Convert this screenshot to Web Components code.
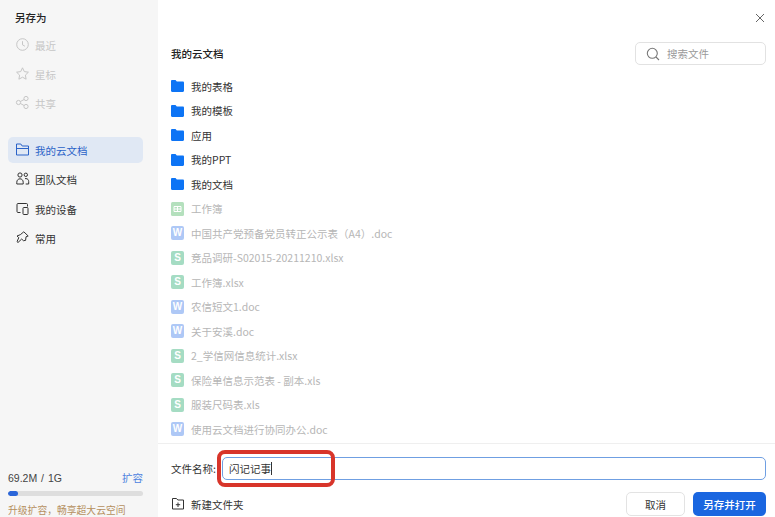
<!DOCTYPE html>
<html>
<head>
<meta charset="utf-8">
<style>
  html, body { margin: 0; padding: 0; height: 100%; background: #fff; overflow: hidden; }
  body { font-family: "Noto Sans CJK SC", "Liberation Sans", sans-serif; font-size: 10.5px; color: #333; }
</style>
</head>
<body>
<save-dialog></save-dialog>

<script>
const FONT = '"Liberation Sans", "Noto Sans CJK SC", sans-serif';

const ICONS = {
  clock: '<circle cx="7.500" cy="7.500" r="5.800"/><path d="M7.500 4.200v3.600l2.400 1.400"/>',
  star: '<path d="M7.500 1.800l1.800 3.800 4.100.6-3 2.900.7 4.100-3.600-2-3.600 2 .7-4.100-3-2.900 4.100-.6z"/>',
  share: '<circle cx="3.500" cy="7.500" r="2.100"/><circle cx="11" cy="3.500" r="2.100"/><circle cx="11" cy="11.500" r="2.100"/><path d="M5.400 6.500l3.700-2M5.400 8.500l3.700 2"/>',
  folder: '<path d="M1.500 2h4.300l1.400 2h6.300v9H1.500z"/><path d="M1.500 6.500h12"/>',
  team: '<circle cx="5" cy="4" r="2.100"/><circle cx="10.800" cy="3.800" r="1.700"/><path d="M1.800 13v-1.800c0-2 1.400-3.400 3.200-3.400s3.200 1.400 3.200 3.400V13z"/><path d="M10 7.600h1c1.700 0 2.700 1.300 2.700 3V13h-3"/>',
  device: '<path d="M5.500 11.500H3c-.6 0-1-.4-1-1v-7c0-.6.4-1 1-1h8.500c.6 0 1 .4 1 1v2"/><rect x="8" y="6.500" width="5" height="7" rx=".8"/>',
  pin: '<path d="M8.800 1.800l4.400 4.200-2.200.8-.4 3.600-2.200.3-1.700-1.700-3.700 3.500-1-.9 1.800-3.900-1.800-1.700 3.300-1.300z"/>'
};

function icon(name) {
  return `<svg width="15" height="15" viewBox="0 0 15 15" fill="none" stroke="currentColor" stroke-width="1">${ICONS[name]}</svg>`;
}

class NavItem extends HTMLElement {
  constructor() {
    super();
    this.attachShadow({ mode: 'open' });
  }

  connectedCallback() {
    this.shadowRoot.innerHTML = `
      <style>
        :host {
          display: flex;
          align-items: center;
          gap: 5px;
          box-sizing: border-box;
          height: 26px;
          padding: 2px 0 0 7px;
          border-radius: 5px;
          color: #333;
          font-size: 10.5px;
        }
        :host([disabled]) { color: #c6c6c6; }
        :host([active]) { background: #e0e8f4; color: #2b63c8; }
        svg { flex: none; margin-top: -2px; }
      </style>
      ${icon(this.getAttribute('icon'))}
      <slot></slot>
    `;
  }
}

class SideNav extends HTMLElement {
  constructor() {
    super();
    this.attachShadow({ mode: 'open' });
  }

  connectedCallback() {
    this.shadowRoot.innerHTML = `
      <style>
        :host {
          display: flex;
          flex-direction: column;
          flex: none;
          box-sizing: border-box;
          width: 158px;
          height: 517px;
          padding: 11px 15px 0 8px;
          background: #f6f6f6;
          font-family: "Noto Sans CJK SC", "Liberation Sans", sans-serif;
        }
        h1 {
          margin: 0 0 6px 7px;
          font-size: 10.5px;
          line-height: 14px;
          font-weight: 500;
          color: #222;
        }
        .group { display: flex; flex-direction: column; gap: 3.300px; }
        .group + .group { margin-top: 21px; }
        .storage { margin-top: auto; font-size: 10.5px; }
        .usage {
          display: flex;
          justify-content: space-between;
          line-height: 14px;
          color: #444;
          font-family: ${FONT};
        }
        .usage span { word-spacing: 1px; }
        .usage a { color: #4d83e0; }
        .bar {
          height: 5px;
          margin: 6px 0 7px;
          border-radius: 2.500px;
          background: #dedede;
          overflow: hidden;
        }
        .bar div { width: 10px; height: 100%; border-radius: 2.500px; background: #2b66d9; }
        .upsell { color: #b5905f; font-size: 9.800px; line-height: 14px; white-space: nowrap; height: 14px; }
      </style>
      <h1>另存为</h1>
      <div class="group">
        <nav-item icon="clock" disabled>最近</nav-item>
        <nav-item icon="star" disabled>星标</nav-item>
        <nav-item icon="share" disabled>共享</nav-item>
      </div>
      <div class="group">
        <nav-item icon="folder" active>我的云文档</nav-item>
        <nav-item icon="team">团队文档</nav-item>
        <nav-item icon="device">我的设备</nav-item>
        <nav-item icon="pin">常用</nav-item>
      </div>
      <div class="storage">
        <div class="usage"><span>69.2M / 1G</span><a>扩容</a></div>
        <div class="bar"><div></div></div>
        <div class="upsell">升级扩容，畅享超大云空间</div>
      </div>
    `;
  }
}

class FileRow extends HTMLElement {
  constructor() {
    super();
    this.attachShadow({ mode: 'open' });
  }

  badge(type) {
    if (type === 'folder') {
      return `<svg width="13" height="14" viewBox="0 0 13 14"><path d="M0 2.200C0 1.500.5 1 1.200 1h3.300l1.300 1.500h6c.7 0 1.200.5 1.200 1.200v8.100c0 .7-.5 1.200-1.200 1.200H1.200C.5 13 0 12.500 0 11.800z" fill="#0d74f5"/></svg>`;
    }
    if (type === 'et') {
      return `<svg width="13" height="14" viewBox="0 0 13 14"><rect width="13" height="14" rx="1.500" fill="#b4e0bd"/><path d="M3 4.500h7v5H3zM3 7h7M6.500 4.500v5" fill="none" stroke="#fff" stroke-width="1"/></svg>`;
    }
    const bg = type === 'w' ? '#aec8f6' : '#a5dcc3';
    return `<span class="b" style="background:${bg}">${type.toUpperCase()}</span>`;
  }

  connectedCallback() {
    const type = this.getAttribute('type');
    this.shadowRoot.innerHTML = `
      <style>
        :host {
          display: flex;
          align-items: center;
          gap: 7px;
          height: 24.500px;
          flex: none;
          font-size: 10.5px;
          color: #333;
          white-space: nowrap;
        }
        :host([muted]) { color: #b6b6b6; }
        svg { flex: none; }
        .b {
          flex: none;
          width: 13px;
          height: 14px;
          border-radius: 2px;
          color: #fff;
          font: bold 10px/13px "Liberation Sans", sans-serif;
          text-align: center;
        }
      </style>
      ${this.badge(type)}
      <slot></slot>
    `;
  }
}

class FileBrowser extends HTMLElement {
  constructor() {
    super();
    this.attachShadow({ mode: 'open' });
  }

  connectedCallback() {
    const folders = ['我的表格', '我的模板', '应用', '我的PPT', '我的文档'];
    const files = [
      ['et', '工作簿'],
      ['w', '中国共产党预备党员转正公示表（A4）.doc'],
      ['s', '竞品调研-S02015-20211210.xlsx'],
      ['s', '工作簿.xlsx'],
      ['w', '农信短文1.doc'],
      ['w', '关于安溪.doc'],
      ['s', '2_学信网信息统计.xlsx'],
      ['s', '保险单信息示范表 - 副本.xls'],
      ['s', '服装尺码表.xls'],
      ['w', '使用云文档进行协同办公.doc']
    ];
    this.shadowRoot.innerHTML = `
      <style>
        :host {
          display: flex;
          flex-direction: column;
          flex: none;
          height: 443px;
          box-sizing: border-box;
          padding: 0 9px 0 13px;
          overflow: hidden;
        }
        .close { display: flex; justify-content: flex-end; height: 42px; padding-top: 12px; box-sizing: border-box; color: #666; }
        header { display: flex; justify-content: space-between; align-items: center; height: 23px; }
        h2 { margin: 0; font-size: 10.5px; font-weight: 500; color: #222; }
        .search {
          display: flex;
          align-items: center;
          gap: 7px;
          box-sizing: border-box;
          width: 131px;
          height: 23px;
          padding-left: 10px;
          border: 1px solid #e2e2e2;
          border-radius: 5px;
          color: #9a9a9a;
          font-size: 10.5px;
        }
        .list { display: flex; flex-direction: column; margin-top: 9px; }
      </style>
      <div class="close">
        <svg width="12" height="12" viewBox="0 0 12 12" fill="none" stroke="currentColor"><path d="M2 2l8 8M10 2l-8 8"/></svg>
      </div>
      <header>
        <h2>我的云文档</h2>
        <div class="search">
          <svg width="14" height="14" viewBox="0 0 14 14" fill="none" stroke="#777" stroke-width="1.100"><circle cx="6.300" cy="6.300" r="5"/><path d="M10 10l3 3"/></svg>
          <span>搜索文件</span>
        </div>
      </header>
      <div class="list">
        ${folders.map(name => `<file-row type="folder">${name}</file-row>`).join('')}
        ${files.map(([type, name]) => `<file-row type="${type}" muted>${name}</file-row>`).join('')}
      </div>
    `;
  }
}

class SaveFooter extends HTMLElement {
  constructor() {
    super();
    this.attachShadow({ mode: 'open' });
  }

  connectedCallback() {
    this.shadowRoot.innerHTML = `
      <style>
        :host {
          display: block;
          flex: 1;
          position: relative;
          box-sizing: border-box;
          padding: 13px 9px 0 13px;
          border-top: 1px solid #efefef;
          font-size: 10.5px;
          color: #333;
        }
        .name { display: flex; align-items: center; gap: 6px; }
        .input {
          flex: 1;
          display: flex;
          align-items: center;
          box-sizing: border-box;
          height: 23px;
          padding-left: 6px;
          border: 1px solid #6f9fe2;
          border-radius: 5px;
          color: #333;
        }
        .caret { width: 1px; height: 13px; background: #333; }
        .actions { display: flex; align-items: center; margin-top: 12px; gap: 8px; }
        .new { display: flex; align-items: center; gap: 6px; margin-right: auto; }
        button {
          box-sizing: border-box;
          height: 24px;
          padding: 0;
          border-radius: 5px;
          font: inherit;
          font-size: 10.5px;
        }
        .cancel { width: 59px; background: #fff; border: 1px solid #e3e3e3; color: #333; }
        .primary { width: 73px; background: #1a66e0; border: 0; color: #fff; font-weight: 500; }
        .mark {
          position: absolute;
          left: 59px;
          top: 6px;
          width: 118px;
          height: 37px;
          box-sizing: border-box;
          border: 4px solid #d8352a;
          border-radius: 8px;
        }
      </style>
      <div class="name">
        <span>文件名称:</span>
        <div class="input"><span>闪记记事</span><i class="caret"></i></div>
      </div>
      <div class="actions">
        <div class="new">
          <svg width="14" height="14" viewBox="0 0 14 14" fill="none" stroke="#333"><path d="M1.500 1.500h4l1.300 1.500h5.700v9h-11zM7 5.500v4.500M4.800 7.700h4.400"/></svg>
          <span>新建文件夹</span>
        </div>
        <button class="cancel">取消</button>
        <button class="primary">另存并打开</button>
      </div>
      <div class="mark"></div>
    `;
  }
}

class SaveDialog extends HTMLElement {
  constructor() {
    super();
    this.attachShadow({ mode: 'open' });
  }

  connectedCallback() {
    this.shadowRoot.innerHTML = `
      <style>
        :host { display: flex; width: 775px; height: 517px; overflow: hidden; background: #fff; }
        main { display: flex; flex-direction: column; flex: 1; min-width: 0; }
      </style>
      <side-nav></side-nav>
      <main>
        <file-browser></file-browser>
        <save-footer></save-footer>
      </main>
    `;
  }
}

customElements.define('nav-item', NavItem);
customElements.define('side-nav', SideNav);
customElements.define('file-row', FileRow);
customElements.define('file-browser', FileBrowser);
customElements.define('save-footer', SaveFooter);
customElements.define('save-dialog', SaveDialog);
</script>
</body>
</html>
